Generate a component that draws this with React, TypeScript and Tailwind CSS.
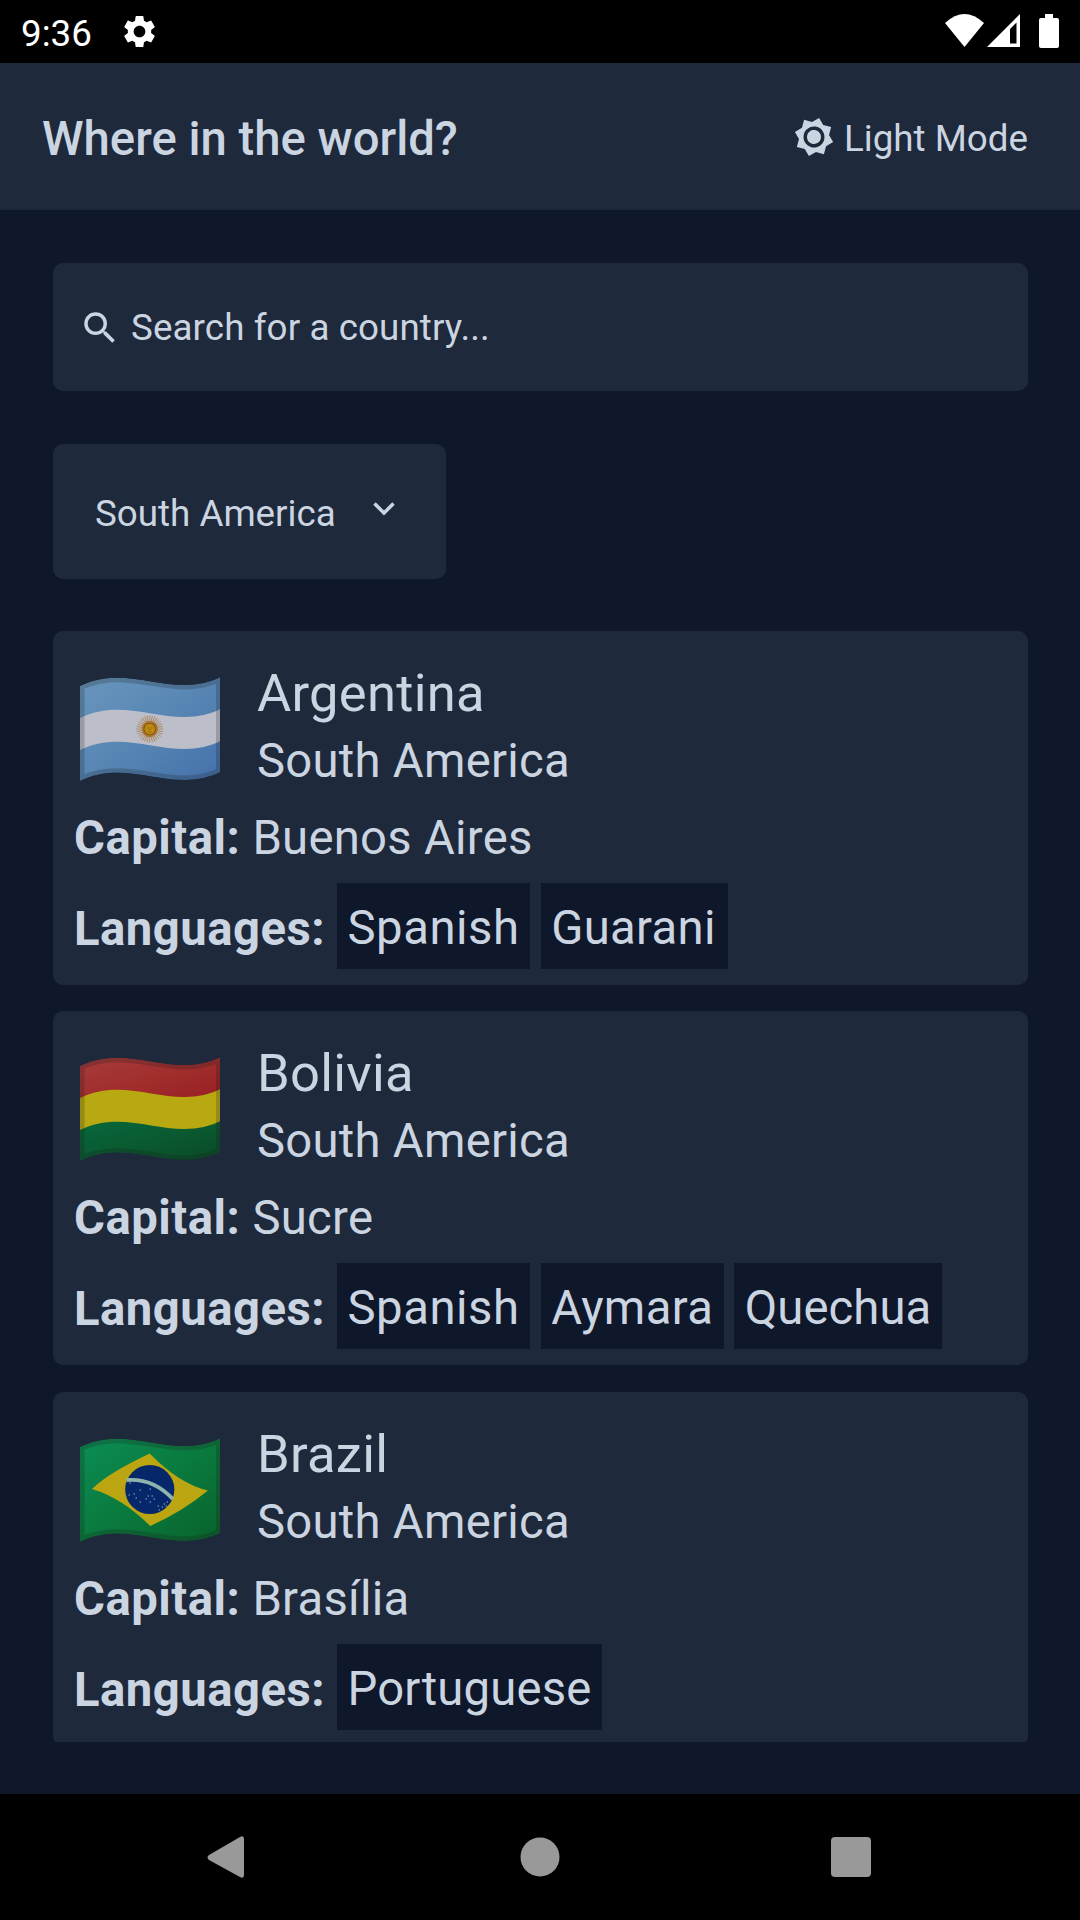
import React, { useId } from "react";
import { MdSettings, MdSearch, MdBrightness7 } from "react-icons/md";

const OUTLINE =
  "M0 9C12 3 24 0.7 37 0.7C60 0.7 82 8 104 8C118 8 130 5 140 0V95C130 100 118 103 104 103C82 103 60 95.7 37 95.7C24 95.7 12 98 0 104Z";

function Band({ y, h, fill }: { y: number; h: number; fill: string }) {
  const b = y + h;
  return (
    <path
      fill={fill}
      d={`M0 ${y + 9}C12 ${y + 3} 24 ${y + 0.7} 37 ${y + 0.7}C60 ${y + 0.7} 82 ${y + 8} 104 ${y + 8}C118 ${y + 8} 130 ${y + 5} 140 ${y}V${b}C130 ${b + 5} 118 ${b + 8} 104 ${b + 8}C82 ${b + 8} 60 ${b + 0.7} 37 ${b + 0.7}C24 ${b + 0.7} 12 ${b + 3} 0 ${b + 9}Z`}
    />
  );
}

function Shade({ id, from, mid, to }: { id: string; from: string; mid: string; to: string }) {
  return (
    <linearGradient id={id} x1="0" y1="0" x2="1" y2="1">
      <stop offset="0" stopColor={from} />
      <stop offset="0.5" stopColor={mid} />
      <stop offset="1" stopColor={to} />
    </linearGradient>
  );
}

const stars = [
  [50, 45], [60, 52], [70, 51], [56, 60], [60, 64], [68, 58], [72, 58], [66, 61], [74, 61], [70, 64],
  [54, 56], [84, 66], [87, 64], [78, 68], [82, 69], [79, 72], [86, 68], [76, 49], [49, 57],
];

function Flag({ name }: { name: string }) {
  const id = useId();
  const rays = Array.from({ length: 32 }, (_, i) => (i * 360) / 32);
  return (
    <svg className="block h-[105px] w-[140.5px] shrink-0" viewBox="0 0 140 105" preserveAspectRatio="none" role="img" aria-label={name}>
      <defs>
        <Shade id={id + "blue"} from="#6a96bc" mid="#5786b4" to="#4470aa" />
        <Shade id={id + "red"} from="#a63c3c" mid="#a12e2d" to="#981f22" />
        <Shade id={id + "dark"} from="#07683c" mid="#0a5a31" to="#0a4927" />
        <Shade id={id + "green"} from="#0b8d55" mid="#0a7a3e" to="#08622b" />
        <clipPath id={id + "c"}>
          <path d={OUTLINE} />
        </clipPath>
      </defs>
      <g clipPath={`url(#${id}c)`}>
        {name === "Argentina" && (
          <>
            <Band y={0} h={95} fill={`url(#${id}blue)`} />
            <Band y={32} h={32} fill="#bcbfc9" />
            <g stroke="#a8743a" strokeWidth="0.9" opacity="0.75">
              {rays.map((r) => (
                <line key={r} x1="69.5" y1="45" x2="69.5" y2="38.5" transform={`rotate(${r} 69.5 52)`} />
              ))}
            </g>
            <circle cx="69.500" cy="52" r="8" fill="#a9752f" />
            <circle cx="69.500" cy="52" r="6.300" fill="#8a5512" />
            <circle cx="69.500" cy="52" r="5.200" fill="#bd8b10" />
            <path d="M67 51h2m1.500 0h2M69.500 52v1.500M68 55h3" stroke="#8a5a10" strokeWidth="0.8" />
          </>
        )}
        {name === "Bolivia" && (
          <>
            <Band y={0} h={33} fill={`url(#${id}red)`} />
            <Band y={63} h={32} fill={`url(#${id}dark)`} />
            <Band y={32} h={32} fill="#b8a912" />
          </>
        )}
        {name === "Brazil" && (
          <>
            <Band y={0} h={95} fill={`url(#${id}green)`} />
            <path d="M12 51Q28 35 69.500 15.500Q99 46 127.500 52.500Q103 73 70 88Q42 60 12 51Z" fill="#bba612" />
            <circle cx="69.500" cy="51.500" r="24.500" fill="#06286a" />
            <path d="M46.500 42Q73 40 92.500 61" stroke="#8fb3ad" strokeWidth="3.800" fill="none" />
            <g fill="#8797b8">
              {stars.map(([x, y]) => (
                <circle key={`${x}-${y}`} cx={x} cy={y} r="0.8" />
              ))}
            </g>
          </>
        )}
        <path d={OUTLINE} fill="none" stroke="#1a1a1a" strokeOpacity="0.22" strokeWidth="9" />
      </g>
    </svg>
  );
}

const countries = [
  {
    name: "Argentina",
    capital: "Buenos Aires",
    languages: [
      { label: "Spanish", spacing: "pr-[10.5px] tracking-[0.55px]" },
      { label: "Guarani", spacing: "pr-[12px] tracking-[0.33px]" },
    ],
  },
  {
    name: "Bolivia",
    capital: "Sucre",
    languages: [
      { label: "Spanish", spacing: "pr-[10.5px] tracking-[0.55px]" },
      { label: "Aymara", spacing: "pr-[10.5px] tracking-[0.35px]" },
      { label: "Quechua", spacing: "pr-[10.5px] tracking-[0.08px]" },
    ],
  },
  {
    name: "Brazil",
    capital: "Brasília",
    languages: [{ label: "Portuguese", spacing: "pr-[10.5px] tracking-[0.18px]" }],
  },
];

function CountryCard({ name, capital, languages }: (typeof countries)[number]) {
  return (
    <article className="h-[354px] shrink-0 rounded-[10px] bg-[#1e293b] px-[21px] pt-[30px] text-[47.25px]">
      <div className="flex h-[139px]">
        <div className="mt-[16px] ml-[5.5px]">
          <Flag name={name} />
        </div>
        <div className="ml-[37px] tracking-[0.27px]">
          <h2 className="h-[65px] text-[52.5px] leading-[64px] whitespace-nowrap">{name}</h2>
          <p className="leading-[70px] whitespace-nowrap">South America</p>
        </div>
      </div>
      <p className="h-[83px] leading-[76px] tracking-[0.27px] whitespace-nowrap">
        <b className="font-bold tracking-[0.5px]">Capital:</b> {capital}
      </p>
      <div className="flex">
        <b className="w-[263px] font-bold leading-[92px] tracking-[0.5px] whitespace-nowrap">Languages:</b>
        <div className="flex gap-[10.5px]">
          {languages.map((l) => (
            <span key={l.label} className={`h-[86px] bg-[#0f172a] pl-[10.5px] leading-[90px] whitespace-nowrap ${l.spacing}`}>
              {l.label}
            </span>
          ))}
        </div>
      </div>
    </article>
  );
}

export default function App() {
  return (
    <div className="flex h-[1920px] w-[1080px] flex-col overflow-hidden bg-[#0f172a] font-['Roboto',sans-serif] text-[#cbd5e1]">
      <div className="flex h-[63px] shrink-0 items-center bg-black text-white">
        <span className="ml-[21px] pt-[5px] text-[36.75px] leading-none">9:36</span>
        <MdSettings className="ml-[28.5px] size-[39px]" />
        <svg className="mr-[21px] mb-px ml-auto h-[34px] w-[115px]" viewBox="0 0 115 34" fill="#fff">
          <path d="M1 9Q20.500 -9 40 9L20.500 33Z" />
          <path fillRule="evenodd" d="M43 33L76 0V33ZM66 15V29.500H72.500V8.500Z" />
          <path d="M101 0H109V4H113Q115 4 115 6V32Q115 34 113 34H97Q95 34 95 32V6Q95 4 97 4H101Z" />
        </svg>
      </div>
      <header className="flex h-[147px] shrink-0 items-center bg-[#1e293b] pr-[52px] pl-[42px]">
        <h1 className="pt-[5px] text-[47.25px] font-medium">Where in the world?</h1>
        <div className="ml-auto flex items-center">
          <MdBrightness7 className="mr-[9px] size-[42px] rotate-15" />
          <span className="pt-[4px] text-[36.75px]">Light Mode</span>
        </div>
      </header>
      <main className="flex min-h-0 flex-1 flex-col pt-[53px] pr-[52px] pb-[52px] pl-[53px]">
        <div className="flex h-[128px] shrink-0 items-center rounded-[10px] bg-[#1e293b] pl-[26px]">
          <MdSearch className="mt-px size-[42px]" />
          <span className="ml-[10px] pt-[2px] text-[36.75px] tracking-[0.1px]">Search for a country...</span>
        </div>
        <div className="mt-[53px] flex h-[135px] w-[393px] shrink-0 items-center rounded-[10px] bg-[#1e293b] pl-[42px]">
          <span className="pt-[4px] text-[36.75px]">South America</span>
          <svg className="mb-[6px] ml-[37px] h-[14px] w-[22px]" viewBox="0 0 22 14" fill="none" stroke="currentColor" strokeWidth="3.5">
            <path d="M1.500 1.500L11 11L20.500 1.500" />
          </svg>
        </div>
        <section className="mt-[52px] flex min-h-0 flex-1 flex-col gap-[26.3px] overflow-hidden">
          {countries.map((c) => (
            <CountryCard key={c.name} {...c} />
          ))}
        </section>
      </main>
      <nav className="flex h-[126px] shrink-0 items-center bg-black">
        <svg className="h-[126px] w-[1080px]" viewBox="0 0 1080 126" fill="#999">
          <path d="M209 61L240 43Q244 41 244 45V81Q244 85 240 83L209 66Q206 63.500 209 61Z" />
          <circle cx="540" cy="63" r="19.500" />
          <rect x="831" y="43" width="40" height="40" rx="4" />
        </svg>
      </nav>
    </div>
  );
}
